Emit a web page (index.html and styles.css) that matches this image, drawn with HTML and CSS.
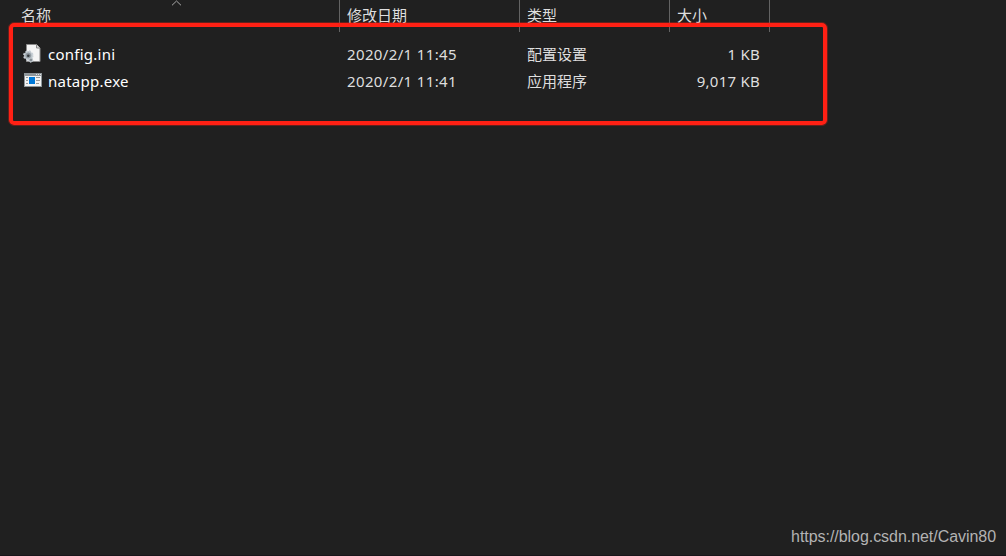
FILE: index.html
```html
<!DOCTYPE html>
<html lang="zh-CN">
<head>
    <meta charset="UTF-8">
    <meta name="viewport" content="width=device-width, initial-scale=1.0">
    <title>natapp</title>
    <link rel="stylesheet" href="styles.css">
</head>
<body>
    <main class="explorer">
        <div class="row header">
            <div class="cell name">
                <span>名称</span>
                <svg class="sort-arrow" viewBox="0 0 11 6" width="11" height="6">
                    <path d="M1 5.3 5.5 1 10 5.3" fill="none" stroke="#a8a8a8" stroke-width="1"/>
                </svg>
            </div>
            <div class="cell date">修改日期</div>
            <div class="cell type">类型</div>
            <div class="cell size">大小</div>
        </div>
        <div class="files">
            <div class="row file">
                <div class="cell name">
                    <!-- settings file: page with a gear -->
                    <svg class="icon" viewBox="0 0 20 20" width="20" height="20">
                        <path d="M4.500 1.500h10l3.500 3.500v13.500H4.500z" fill="#f5f5f5" stroke="#8b8b8b"/>
                        <path d="M14.500 1.500v3.500H18" fill="#ddd" stroke="#8b8b8b"/>
                        <circle cx="6.300" cy="12.500" r="4.300" fill="#b4bcc2" stroke="#c8d0d6" stroke-width="1.800" stroke-dasharray="1.900 1.500"/>
                        <circle cx="8.800" cy="17" r="2.200" fill="#aeb6bc" stroke="#cbd2d7" stroke-dasharray="1.500 1"/>
                        <circle cx="6.300" cy="12.500" r="2.700" fill="#8e989f"/>
                        <circle cx="6.300" cy="12.700" r="1.300" fill="#363b3f"/>
                        <circle cx="9" cy="17" r=".8" fill="#555c61"/>
                    </svg>
                    <span>config.ini</span>
                </div>
                <div class="cell date">2020/2/1 11:45</div>
                <div class="cell type">配置设置</div>
                <div class="cell size">1 KB</div>
            </div>
            <div class="row file">
                <div class="cell name">
                    <!-- application window -->
                    <svg class="icon" viewBox="0 0 20 20" width="20" height="20">
                        <path d="M2 3h18v14H2z" fill="#8f969a"/>
                        <path d="M3 6h16v10H3z" fill="#f3f3f3"/>
                        <path d="M14 4h1v1h-1zM16 4h1v1h-1zM18 4h1v1h-1z" fill="#e0e3e5"/>
                        <path d="M7 7h6v7H7z" fill="#0078d7"/>
                        <path d="M4 7.500h2M4 10.500h2M4 13.500h2M14 7.500h4M14 10.500h4M14 13.500h3" stroke="#999"/>
                    </svg>
                    <span>natapp.exe</span>
                </div>
                <div class="cell date">2020/2/1 11:41</div>
                <div class="cell type">应用程序</div>
                <div class="cell size">9,017 KB</div>
            </div>
        </div>
        <div class="highlight"></div>
        <footer>https://blog.csdn.net/Cavin80</footer>
    </main>
</body>
</html>
```
FILE: styles.css
```css
* {
    box-sizing: border-box;
}
body {
    margin: 0;
    background-color: #202020;
    color: #dedede;
    font-family: 'Noto Sans', 'Noto Sans CJK SC', sans-serif;
    font-size: 15px;
}
.explorer {
    position: relative;
    display: flex;
    flex-direction: column;
    height: 556px;
    overflow: hidden;
    border-bottom: 1px solid #19151a;
}
.row {
    display: grid;
    grid-template-columns: 340px 180px 150px 100px;
    width: 770px;
}
.cell {
    white-space: nowrap;
    padding-left: 7px;
}
.header {
    height: 32px;
    line-height: 30px;
}
.header .cell {
    border-right: 1px solid #636363;
}
.header .name {
    position: relative;
    padding-left: 21px;
}
.sort-arrow {
    position: absolute;
    top: 0;
    left: 171px;
}
.files {
    padding-top: 9px;
}
.file {
    height: 27px;
    line-height: 27px;
}
.file .name {
    display: flex;
    align-items: flex-start;
    gap: 6px;
    padding-left: 22px;
    color: #fff;
    letter-spacing: 0.25px;
}
.file .date {
    letter-spacing: 0.36px;
}
.file .size {
    padding-right: 10px;
    text-align: right;
    letter-spacing: 0.25px;
}
.icon {
    flex: none;
    margin-top: 2px;
}
.highlight {
    position: absolute;
    top: 23px;
    left: 9px;
    width: 818px;
    height: 102px;
    border: 4px solid #ff2014;
    outline: 1px solid rgba(255, 32, 20, 0.3);
    border-radius: 5px;
}
footer {
    margin-top: auto;
    padding: 0 10px 9px;
    color: #b3b3b3;
    font-family: 'Liberation Sans', sans-serif;
    font-size: 16px;
    line-height: 18px;
    letter-spacing: -0.05px;
    text-align: right;
}
```
